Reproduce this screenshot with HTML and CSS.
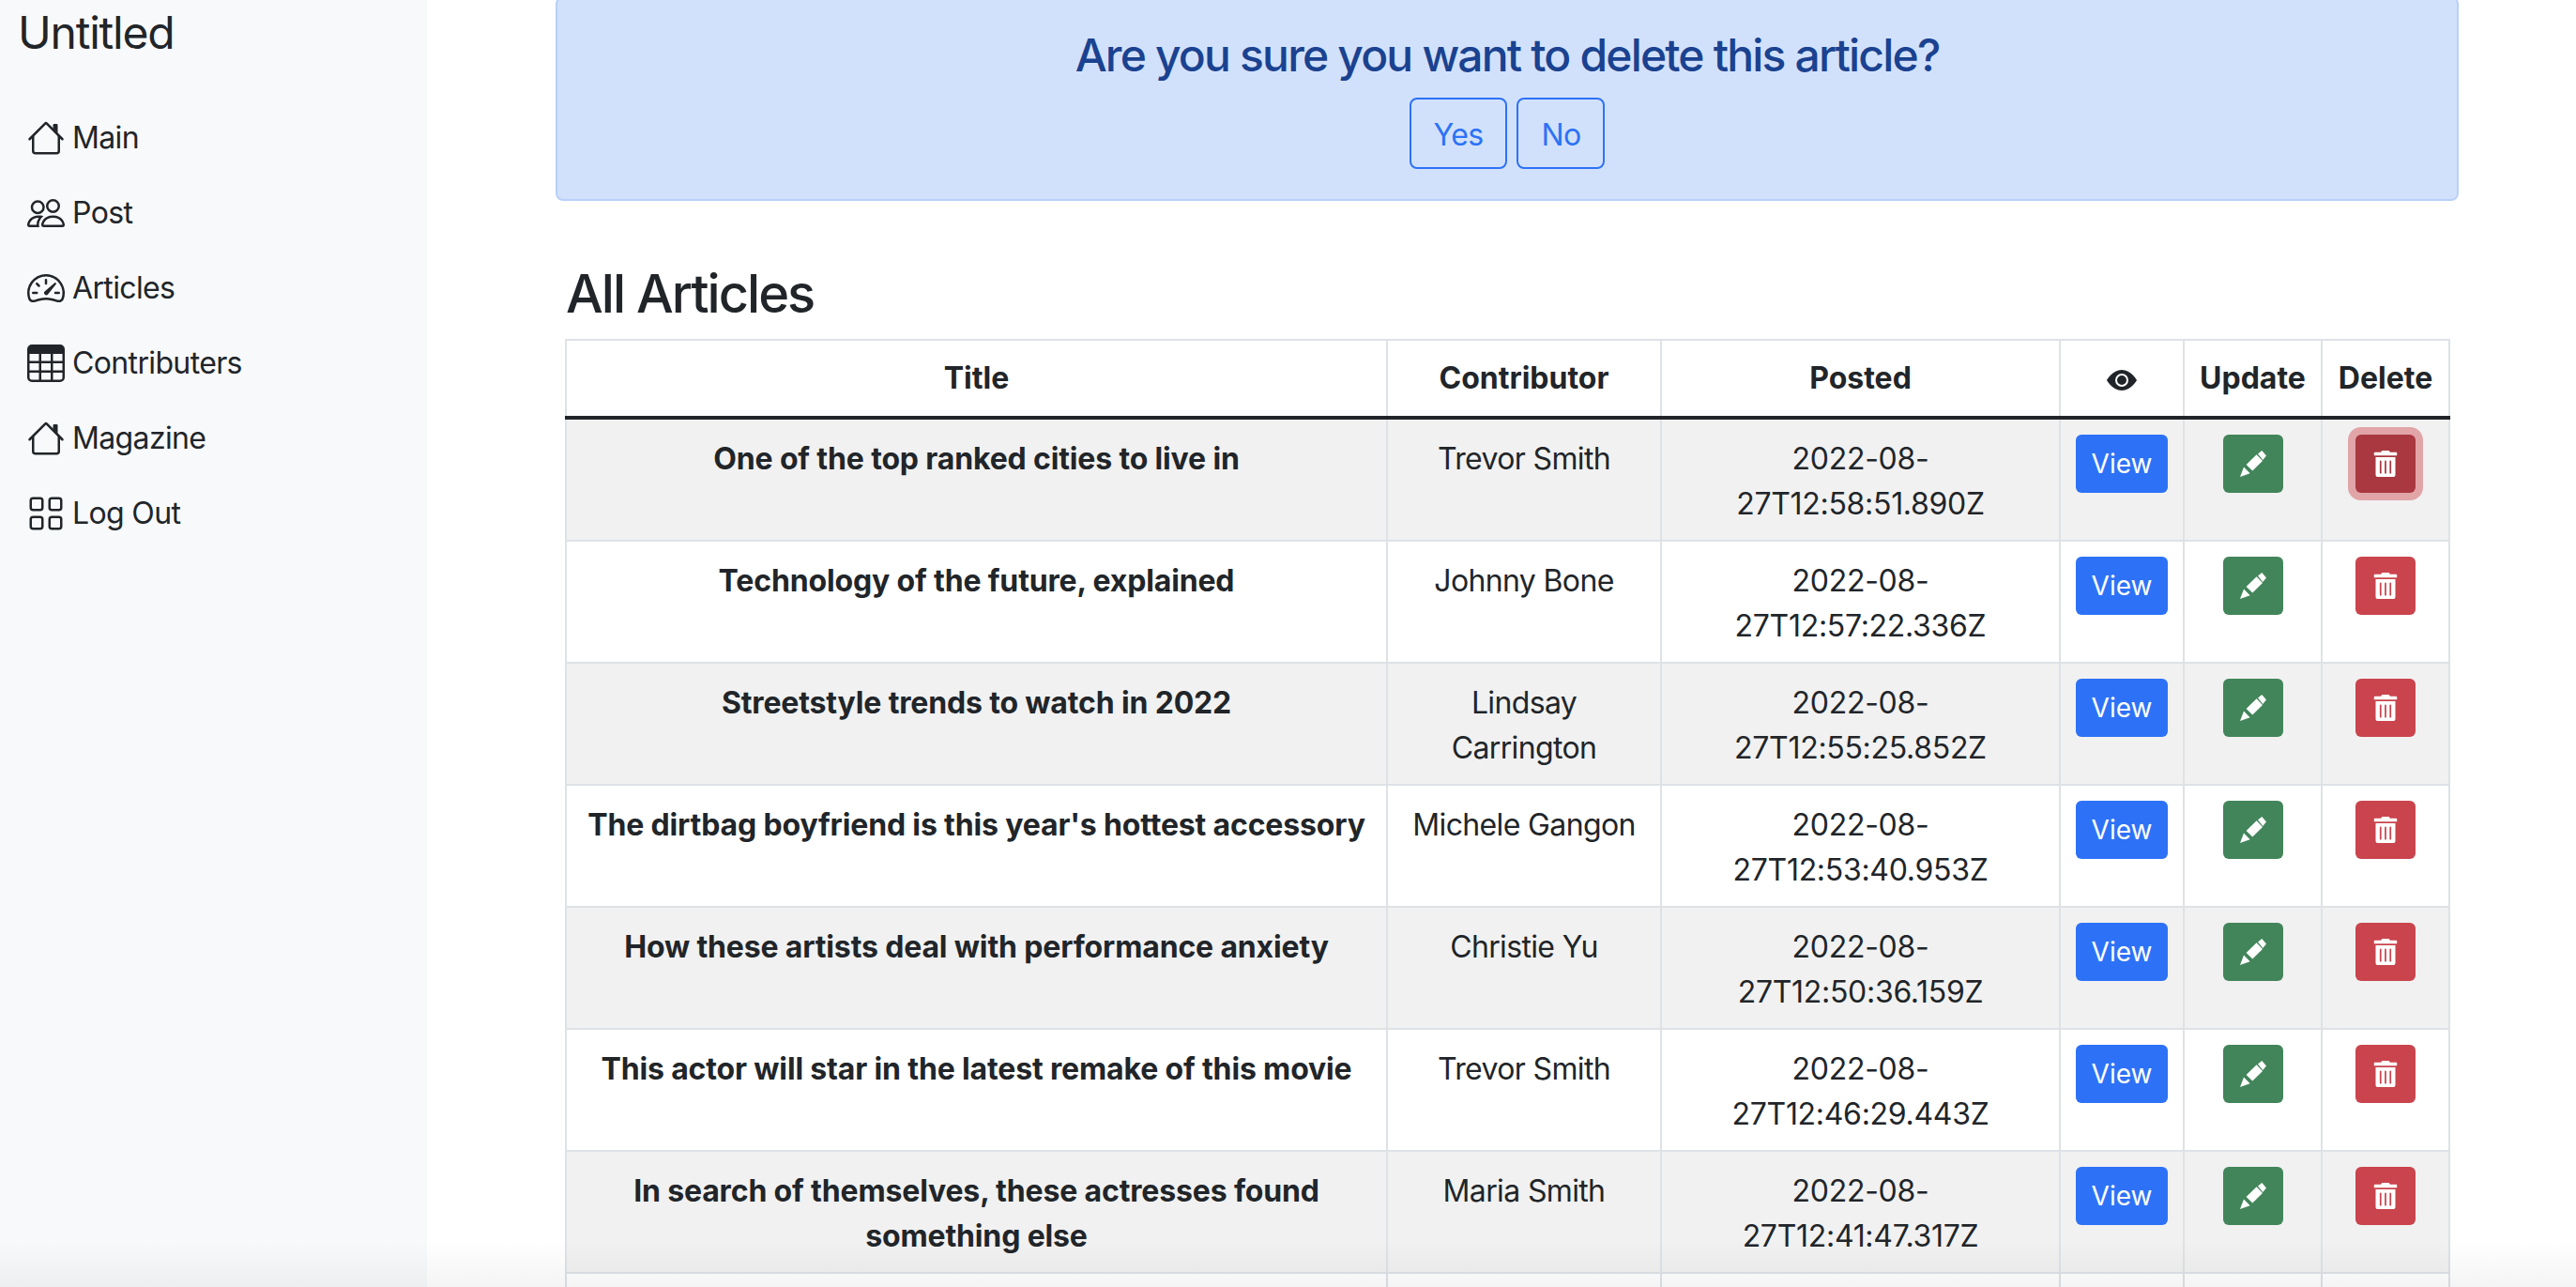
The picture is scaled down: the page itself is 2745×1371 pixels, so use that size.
FILE: index.html
```html
<!DOCTYPE html>
<html>
	<head>
		<meta charset="utf-8" />
		<title>Untitled</title>
		<link rel="stylesheet" href="styles.css">
	</head>
	<body>
		<div class="layout">
			<aside class="sidebar">
				<div class="brand">Untitled</div>
				<ul class="nav">
					<li><svg viewBox="0 0 16 16"><path d="M2 13.5V7h1v6.5a.5.5 0 0 0 .5.5h9a.5.5 0 0 0 .5-.5V7h1v6.5a1.5 1.5 0 0 1-1.5 1.5h-9A1.5 1.5 0 0 1 2 13.5zm11-11V6l-2-2V2.5a.5.5 0 0 1 .5-.5h1a.5.5 0 0 1 .5.5z"/><path d="M7.293 1.5a1 1 0 0 1 1.414 0l6.647 6.646a.5.5 0 0 1-.708.708L8 2.207 1.354 8.854a.5.5 0 1 1-.708-.708L7.293 1.5z"/></svg>Main</li>
					<li><svg viewBox="0 0 16 16"><path d="M15 14s1 0 1-1-1-4-5-4-5 3-5 4 1 1 1 1h8Zm-7.978-1A.261.261 0 0 1 7 12.996c.001-.264.167-1.03.76-1.72C8.312 10.629 9.282 10 11 10c1.717 0 2.687.63 3.24 1.276.593.69.758 1.457.76 1.72l-.008.002a.274.274 0 0 1-.014.002H7.022ZM11 7a2 2 0 1 0 0-4 2 2 0 0 0 0 4Zm3-2a3 3 0 1 1-6 0 3 3 0 0 1 6 0ZM6.936 9.28a5.88 5.88 0 0 0-1.23-.247A7.35 7.35 0 0 0 5 9c-4 0-5 3-5 4 0 .667.333 1 1 1h4.216A2.238 2.238 0 0 1 5 13c0-1.01.377-2.042 1.09-2.904.243-.294.526-.569.846-.816ZM4.92 10A5.493 5.493 0 0 0 4 13H1c0-.26.164-1.03.76-1.724.545-.636 1.492-1.256 3.16-1.275ZM1.5 5.5a3 3 0 1 1 6 0 3 3 0 0 1-6 0Zm3-2a2 2 0 1 0 0 4 2 2 0 0 0 0-4Z"/></svg>Post</li>
					<li><svg viewBox="0 0 16 16"><path d="M8 4a.5.5 0 0 1 .5.5V6a.5.5 0 0 1-1 0V4.5A.5.5 0 0 1 8 4zM3.732 5.732a.5.5 0 0 1 .707 0l.915.914a.5.5 0 1 1-.708.708l-.914-.915a.5.5 0 0 1 0-.707zM2 10a.5.5 0 0 1 .5-.5h1.586a.5.5 0 0 1 0 1H2.5A.5.5 0 0 1 2 10zm9.5 0a.5.5 0 0 1 .5-.5h1.5a.5.5 0 0 1 0 1H12a.5.5 0 0 1-.5-.5zm.754-4.246a.389.389 0 0 0-.527-.02L7.547 9.31a.91.91 0 1 0 1.302 1.258l3.434-4.297a.389.389 0 0 0-.029-.518z"/><path fill-rule="evenodd" d="M0 10a8 8 0 1 1 15.547 2.661c-.442 1.253-1.845 1.602-2.932 1.25C11.309 13.488 9.475 13 8 13c-1.474 0-3.31.488-4.615.911-1.087.352-2.49.003-2.932-1.25A7.988 7.988 0 0 1 0 10zm8-7a7 7 0 0 0-6.603 9.329c.203.575.923.876 1.68.63C4.397 12.533 6.358 12 8 12s3.604.532 4.923.96c.757.245 1.477-.056 1.68-.631A7 7 0 0 0 8 3z"/></svg>Articles</li>
					<li><svg viewBox="0 0 16 16"><path d="M0 2a2 2 0 0 1 2-2h12a2 2 0 0 1 2 2v12a2 2 0 0 1-2 2H2a2 2 0 0 1-2-2V2zm15 2h-4v3h4V4zm0 4h-4v3h4V8zm0 4h-4v3h3a1 1 0 0 0 1-1v-2zm-5 3v-3H6v3h4zm-5 0v-3H1v2a1 1 0 0 0 1 1h3zm-4-4h4V8H1v3zm0-4h4V4H1v3zm5-3v3h4V4H6zm4 4H6v3h4V8z"/></svg>Contributers</li>
					<li><svg viewBox="0 0 16 16"><path d="M2 13.5V7h1v6.5a.5.5 0 0 0 .5.5h9a.5.5 0 0 0 .5-.5V7h1v6.5a1.5 1.5 0 0 1-1.5 1.5h-9A1.5 1.5 0 0 1 2 13.5zm11-11V6l-2-2V2.5a.5.5 0 0 1 .5-.5h1a.5.5 0 0 1 .5.5z"/><path d="M7.293 1.5a1 1 0 0 1 1.414 0l6.647 6.646a.5.5 0 0 1-.708.708L8 2.207 1.354 8.854a.5.5 0 1 1-.708-.708L7.293 1.5z"/></svg>Magazine</li>
					<li><svg viewBox="0 0 16 16"><path d="M1 2.5A1.5 1.5 0 0 1 2.5 1h3A1.5 1.5 0 0 1 7 2.5v3A1.5 1.5 0 0 1 5.5 7h-3A1.5 1.5 0 0 1 1 5.5v-3zM2.5 2a.5.5 0 0 0-.5.5v3a.5.5 0 0 0 .5.5h3a.5.5 0 0 0 .5-.5v-3a.5.5 0 0 0-.5-.5h-3zm6.5.5A1.5 1.5 0 0 1 10.5 1h3A1.5 1.5 0 0 1 15 2.5v3A1.5 1.5 0 0 1 13.5 7h-3A1.5 1.5 0 0 1 9 5.5v-3zm1.5-.5a.5.5 0 0 0-.5.5v3a.5.5 0 0 0 .5.5h3a.5.5 0 0 0 .5-.5v-3a.5.5 0 0 0-.5-.5h-3zM1 10.5A1.5 1.5 0 0 1 2.5 9h3A1.5 1.5 0 0 1 7 10.5v3A1.5 1.5 0 0 1 5.5 15h-3A1.5 1.5 0 0 1 1 13.5v-3zm1.5-.5a.5.5 0 0 0-.5.5v3a.5.5 0 0 0 .5.5h3a.5.5 0 0 0 .5-.5v-3a.5.5 0 0 0-.5-.5h-3zm6.5.5A1.5 1.5 0 0 1 10.5 9h3a1.5 1.5 0 0 1 1.5 1.5v3a1.5 1.5 0 0 1-1.5 1.5h-3A1.5 1.5 0 0 1 9 13.5v-3zm1.5-.5a.5.5 0 0 0-.5.5v3a.5.5 0 0 0 .5.5h3a.5.5 0 0 0 .5-.5v-3a.5.5 0 0 0-.5-.5h-3z"/></svg>Log Out</li>
				</ul>
			</aside>

			<main class="content">
				<div class="alert">
					<h4>Are you sure you want to delete this article?</h4>
					<div class="confirm">
						<button class="btn-outline">Yes</button>
						<button class="btn-outline">No</button>
					</div>
				</div>

				<h3>All Articles</h3>

				<table>
					<colgroup>
						<col class="c-title"><col class="c-name"><col class="c-date"><col class="c-view"><col class="c-edit"><col class="c-del">
					</colgroup>
					<thead>
						<tr>
							<th>Title</th>
							<th>Contributor</th>
							<th>Posted</th>
							<th><svg class="eye" viewBox="0 0 16 16"><path d="M10.5 8a2.5 2.5 0 1 1-5 0 2.5 2.5 0 0 1 5 0z"/><path d="M0 8s3-5.5 8-5.5S16 8 16 8s-3 5.5-8 5.5S0 8 0 8zm8 3.5a3.5 3.5 0 1 0 0-7 3.5 3.5 0 0 0 0 7z"/></svg></th>
							<th>Update</th>
							<th>Delete</th>
						</tr>
					</thead>
					<tbody id="rows"></tbody>
				</table>
			</main>
		</div>
		<div class="fade"></div>

		<script>
			var articles = [
				["One of the top ranked cities to live in", "Trevor Smith", "2022-08-27T12:58:51.890Z"],
				["Technology of the future, explained", "Johnny Bone", "2022-08-27T12:57:22.336Z"],
				["Streetstyle trends to watch in 2022", "Lindsay Carrington", "2022-08-27T12:55:25.852Z"],
				["The dirtbag boyfriend is this year's hottest accessory", "Michele Gangon", "2022-08-27T12:53:40.953Z"],
				["How these artists deal with performance anxiety", "Christie Yu", "2022-08-27T12:50:36.159Z"],
				["This actor will star in the latest remake of this movie", "Trevor Smith", "2022-08-27T12:46:29.443Z"],
				["In search of themselves, these actresses found something else", "Maria Smith", "2022-08-27T12:41:47.317Z"]
			];
			var pencil = '<svg viewBox="0 0 28 28"><polygon points="19,3.4 23.3,0 28,5.4 24.3,10"/><polygon points="6.6,15 17.6,4.2 24,11 13.3,21.6"/><polygon points="0,28 4,17.6 10.6,24.3"/></svg>';
			var trash = '<svg viewBox="0 0 448 512"><path d="M32 464a48 48 0 0 0 48 48h288a48 48 0 0 0 48-48V128H32zm272-256a16 16 0 0 1 32 0v224a16 16 0 0 1-32 0zm-96 0a16 16 0 0 1 32 0v224a16 16 0 0 1-32 0zm-96 0a16 16 0 0 1 32 0v224a16 16 0 0 1-32 0zM432 32H312l-9.4-18.7A24 24 0 0 0 281.1 0H166.8a23.72 23.72 0 0 0-21.4 13.3L136 32H16A16 16 0 0 0 0 48v32a16 16 0 0 0 16 16h416a16 16 0 0 0 16-16V48a16 16 0 0 0-16-16z"/></svg>';
			var html = "";
			for (var i = 0; i < articles.length; i++) {
				var a = articles[i];
				html += "<tr>" +
					"<td class=\"title\">" + a[0] + "</td>" +
					"<td class=\"name\">" + a[1] + "</td>" +
					"<td class=\"date\">" + a[2] + "</td>" +
					"<td><button class=\"btn blue\">View</button></td>" +
					"<td><button class=\"btn green\">" + pencil + "</button></td>" +
					"<td><button class=\"btn red" + (i == 0 ? " active" : "") + "\">" + trash + "</button></td>" +
					"</tr>";
			}
			// the next row starts just above the fold, only its borders show
			html += "<tr><td></td><td></td><td></td><td></td><td></td><td></td></tr>";
			document.getElementById("rows").innerHTML = html;
		</script>
	</body>
</html>
```

FILE: styles.css
```css
* {
	box-sizing: border-box;
	padding: 0;
	margin: 0;
	list-style: none;
}

html, body {
	height: 100%;
	overflow: hidden;
}

body {
	font-family: Inter, "Liberation Sans", sans-serif;
	font-size: 32px;
	line-height: 48px;
	color: #212529;
	background: #fff;
	letter-spacing: -0.02em;
}

.layout {
	display: flex;
	height: 1371px;
}

/* sidebar */
.sidebar {
	width: 455px;
	flex: none;
	background: #f8f9fa;
	padding: 6px 0 0 19px;
}

.brand {
	font-size: 48px;
	line-height: 58px;
	letter-spacing: -0.025em;
	margin-bottom: 43px;
}

.nav li {
	display: flex;
	align-items: center;
	height: 80px;
	padding-left: 10px;
}

.nav svg {
	width: 40px;
	height: 40px;
	margin-right: 8px;
	fill: #212529;
}

/* main */
.content {
	flex: 1;
	padding-left: 137px;
	padding-right: 125px;
	margin-top: -4px;
}

.alert {
	background: #d2e1fb;
	border: 2px solid #b8d0f9;
	border-radius: 8px;
	padding: 32px;
	text-align: center;
	color: #1a4290;
}

.alert h4 {
	font-size: 48px;
	line-height: 58px;
	font-weight: 500;
	letter-spacing: -0.038em;
	margin-bottom: 16px;
}

.confirm {
	display: flex;
	justify-content: center;
	gap: 10px;
}

.btn-outline {
	font: inherit;
	letter-spacing: inherit;
	color: #2d72f6;
	background: transparent;
	border: 2px solid #2d72f6;
	border-radius: 8px;
	padding: 14px 24px 10px;
}

h3 {
	font-size: 56px;
	line-height: 68px;
	font-weight: 500;
	letter-spacing: -0.035em;
	margin: 65px 0 14px 11px;
}

table {
	width: 2007px;
	margin-left: 10px;
	border-collapse: collapse;
	table-layout: fixed;
	text-align: center;
}

.c-title { width: 875px; }
.c-name { width: 292px; }
.c-date { width: 425px; }
.c-view { width: 132px; }
.c-edit { width: 147px; }
.c-del { width: 136px; }

th, td {
	border: 2px solid #dee2e6;
	padding: 16px;
	vertical-align: top;
}

th {
	font-weight: 700;
	letter-spacing: 0;
	padding: 16px 0;
	vertical-align: middle;
}

thead th {
	border-bottom: 4px solid #212529;
}

td.title,
td.name,
td.date {
	padding-top: 18px;
	padding-bottom: 14px;
}

td.title {
	font-weight: 700;
	letter-spacing: -0.15px;
}

td.date {
	letter-spacing: -0.3px;
}

tbody tr:nth-child(odd) td {
	background: #f1f1f1;
}

tbody td {
	height: 130px;
}

.eye {
	width: 32px;
	height: 32px;
	fill: #212529;
	vertical-align: middle;
}

.btn {
	display: inline-flex;
	align-items: center;
	justify-content: center;
	height: 62px;
	min-width: 64px;
	border: 0;
	border-radius: 6px;
	font: inherit;
	font-size: 28px;
	letter-spacing: 0;
	color: #fff;
	padding: 0 16px;
}

.btn svg {
	height: 28px;
	width: 28px;
	fill: #fff;
}

.blue { background: #2d72f6; width: 98px; }
.green { background: #42855a; }
.red { background: #ca444d; }

.red.active {
	background: #aa3840;
	box-shadow: 0 0 0 8px #e1a5a8;
}

.fade {
	position: absolute;
	left: 0;
	right: 0;
	bottom: 0;
	height: 50px;
	background: linear-gradient(rgba(0, 0, 0, 0), rgba(0, 0, 0, 0.045));
	pointer-events: none;
}
```
